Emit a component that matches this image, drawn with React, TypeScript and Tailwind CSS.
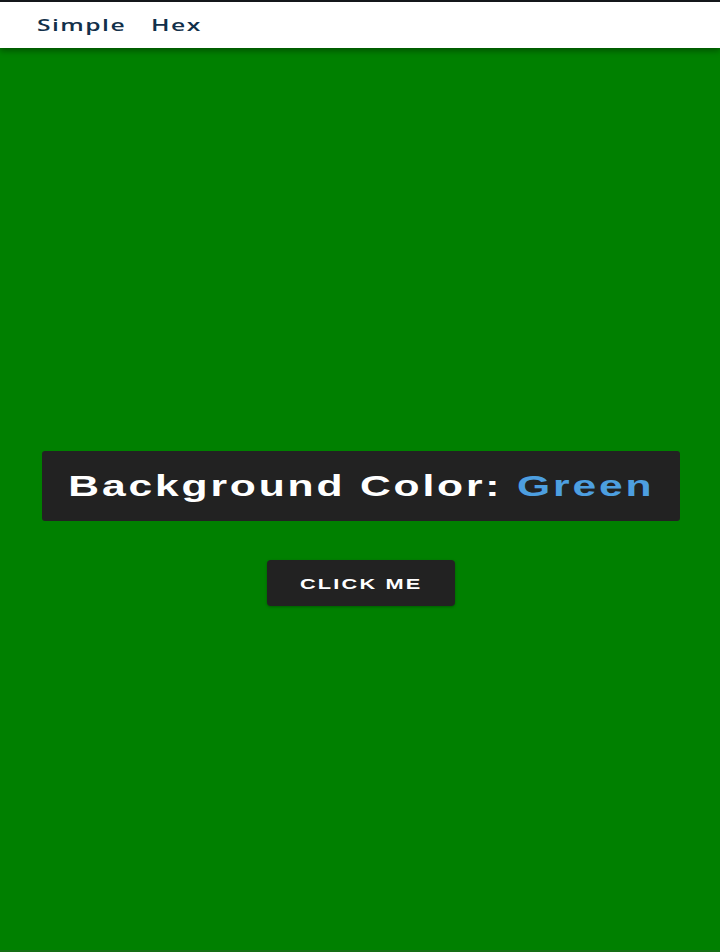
import { useState } from "react";

const colors = ["Green", "Red", "Blue", "Purple", "Orange"];
const values: Record<string, string> = {
  Green: "#008000",
  Red: "#d62828",
  Blue: "#1d4ed8",
  Purple: "#6b21a8",
  Orange: "#ea580c",
};

export default function App() {
  const [index, setIndex] = useState(0);
  const color = colors[index];

  return (
    <div className="min-h-[952px] flex flex-col bg-[#15181c] pt-[2px] font-['Liberation_Sans',Arial,sans-serif]">
      <nav className="h-[46px] bg-white flex items-center pl-[37px] shadow-[0_3px_6px_rgba(0,0,0,0.35)] relative z-10 font-['Open_Sans',sans-serif] font-semibold text-[17px] text-[#12304a]">
        <a className="w-[114px]">
          <span className="inline-block origin-left scale-x-[1.45] tracking-[1px] leading-none">
            Simple
          </span>
        </a>
        <a>
          <span className="inline-block origin-left scale-x-[1.45] tracking-[1px] leading-none">
            Hex
          </span>
        </a>
      </nav>

      <main
        className="flex-1 flex flex-col items-center pt-[403px] border-b-2 border-[#156f15]"
        style={{ backgroundColor: values[color] }}
      >
        <div className="ml-[2px] w-[638px] h-[70px] bg-[#222222] rounded-[3px] flex items-center justify-center">
          <h2 className="inline-block scale-x-[1.42] text-[30px] font-bold tracking-[2px] text-white leading-none whitespace-nowrap">
            Background Color: <span className="text-[#4d9fe0]">{color}</span>
          </h2>
        </div>

        <button
          onClick={() => setIndex((index + 1) % colors.length)}
          className="ml-[2px] mt-[39px] w-[188px] h-[46px] bg-[#222222] rounded-[4px] flex items-center justify-center shadow-[0_1px_3px_rgba(0,0,0,0.3)]"
        >
          <span className="inline-block scale-x-[1.45] text-[15px] font-bold tracking-[1.5px] text-white uppercase leading-none">
            Click me
          </span>
        </button>
      </main>
    </div>
  );
}
